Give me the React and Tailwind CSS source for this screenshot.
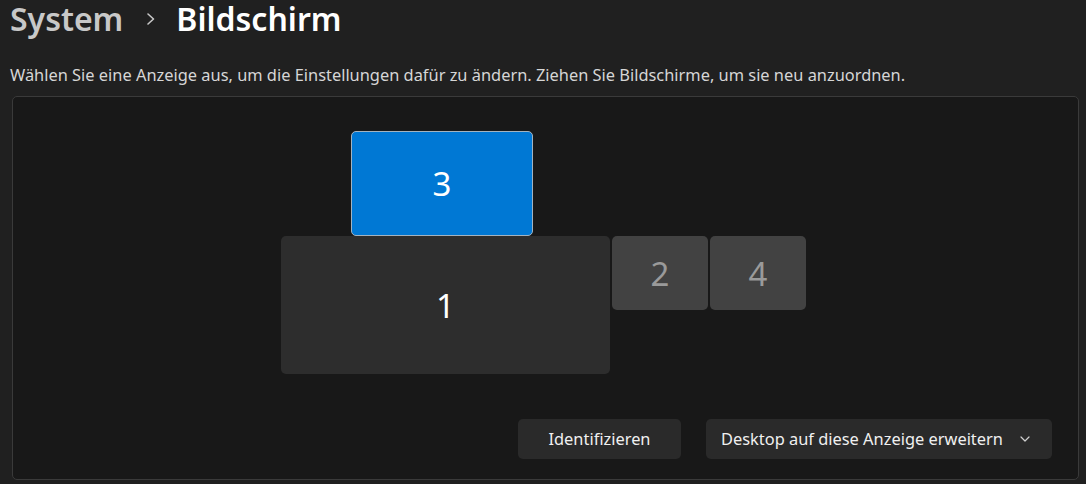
import React from "react";

const font = { fontFamily: '"Segoe UI", "Noto Sans", "Open Sans", sans-serif' };

function Monitor({ n, cls, numCls, style }) {
  return (
    <div
      className={`absolute flex items-center justify-center rounded-[5px] ${cls}`}
      style={style}
    >
      <span className={`text-[33px] leading-none ${numCls}`}>{n}</span>
    </div>
  );
}

export default function App() {
  return (
    <div className="w-[1086px] h-[484px] bg-[#202020] overflow-hidden flex flex-col" style={font}>
      <div className="flex items-center h-[37px] pl-[10px] text-[32px] font-semibold leading-[37px]">
        <span className="text-[#c8c8c8]">System</span>
        <svg className="ml-[22px] mr-[19px] mt-[1px]" width="12" height="14" viewBox="0 0 12 14">
          <path d="M3 2 L8.5 7 L3 12" fill="none" stroke="#c8c8c8" strokeWidth="1.6" strokeLinecap="round" strokeLinejoin="round" />
        </svg>
        <span className="text-white">Bildschirm</span>
      </div>
      <div className="pl-[10px] mt-[27px] text-[16.4px] text-[#d6d6d6] leading-[22px]">
        Wählen Sie eine Anzeige aus, um die Einstellungen dafür zu ändern. Ziehen Sie Bildschirme, um sie neu anzuordnen.
      </div>
      <div className="ml-[12px] w-[1067px] mt-[10px] h-[384px] rounded-[5px] border border-[#3a3a3a] bg-[#181818] flex flex-col">
        <div className="relative h-[321px]">
          <Monitor n="3" cls="bg-[#0078d4] border border-[#a3b3c0]" numCls="text-white" style={{ left: 338, top: 34, width: 182, height: 105 }} />
          <Monitor n="1" cls="bg-[#2d2d2d]" numCls="text-white" style={{ left: 268, top: 139, width: 329, height: 138 }} />
          <Monitor n="2" cls="bg-[#424242]" numCls="text-[#9a9a9a]" style={{ left: 599, top: 139, width: 96, height: 74 }} />
          <Monitor n="4" cls="bg-[#424242]" numCls="text-[#9a9a9a]" style={{ left: 697, top: 139, width: 96, height: 74 }} />
        </div>
        <div className="flex justify-end gap-[25px] pr-[26px] mt-[1px]">
          <button className="w-[163px] h-[40px] rounded-[5px] bg-[#2a2a2a] text-[16.4px] text-[#f0f0f0]">
            Identifizieren
          </button>
          <button className="w-[346px] h-[40px] rounded-[5px] bg-[#2a2a2a] text-[16.4px] text-[#f0f0f0] flex items-center pl-[15px] pr-[21px] justify-between">
            <span>Desktop auf diese Anzeige erweitern</span>
            <svg width="12" height="8" viewBox="0 0 12 8">
              <path d="M2 2 L6 6 L10 2" fill="none" stroke="#cfcfcf" strokeWidth="1.2" strokeLinecap="round" strokeLinejoin="round" />
            </svg>
          </button>
        </div>
      </div>
    </div>
  );
}
